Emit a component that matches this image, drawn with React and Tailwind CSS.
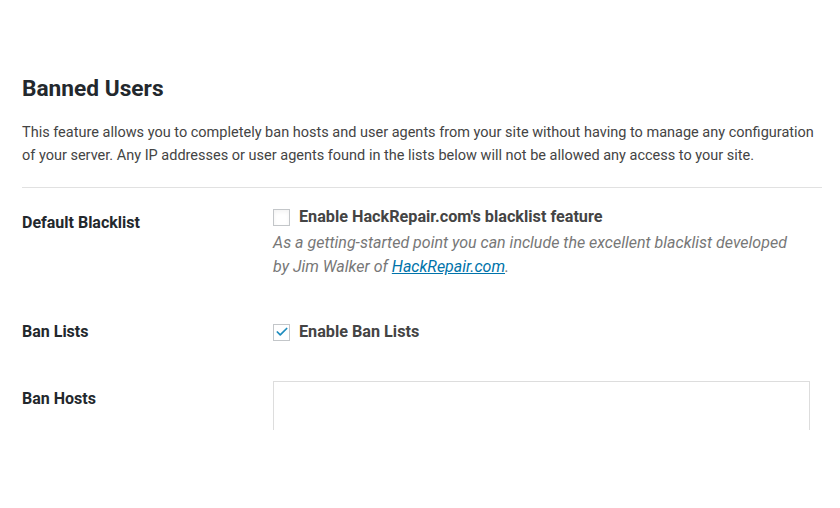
import { Check } from 'lucide-react';

export default function App() {
    return (
        <div className="w-[840px] h-[508px] bg-white font-['Roboto',sans-serif]">
            <div className="h-[430px] overflow-hidden px-[22px] pt-[74px]">
                <h2 className="text-[22.7px] leading-[30px] font-bold text-[#23282d]">Banned Users</h2>

                <p className="mt-[17px] text-[14.5px] leading-[23px] text-[#444] w-[800px]">
                    This feature allows you to completely ban hosts and user agents from your site without having to manage any configuration of your server. Any IP addresses or user agents found in the lists below will not be allowed any access to your site.
                </p>

                <div className="mt-[20px] border-t border-[#e1e1e1] w-[800px]" />

                <div className="flex mt-[19px]">
                    <div className="w-[251px] shrink-0 pt-[4px] text-[16px] font-bold text-[#23282d]">Default Blacklist</div>
                    <div>
                        <label className="flex items-center gap-[9px]">
                            <span className="w-[17px] h-[17px] border border-[#c3c6c9] bg-white shadow-inner" />
                            <span className="text-[16.2px] leading-[20px] font-bold text-[#444]">Enable HackRepair.com's blacklist feature</span>
                        </label>
                        <p className="mt-[4px] text-[16px] leading-[24px] italic text-[#777] w-[528px]">
                            As a getting-started point you can include the excellent blacklist developed by Jim Walker of <a className="text-[#0073aa] underline">HackRepair.com</a>.
                        </p>
                    </div>
                </div>

                <div className="flex mt-[43px]">
                    <div className="w-[251px] shrink-0 text-[16px] leading-[20px] font-bold text-[#23282d]">Ban Lists</div>
                    <label className="flex items-center gap-[9px]">
                        <span className="w-[17px] h-[17px] border border-[#c3c6c9] bg-white flex items-center justify-center">
                            <Check size={14} strokeWidth={3} className="text-[#1e8cbe]" />
                        </span>
                        <span className="text-[16.2px] leading-[20px] font-bold text-[#444]">Enable Ban Lists</span>
                    </label>
                </div>

                <div className="flex mt-[39px]">
                    <div className="w-[251px] shrink-0 pt-[8px] text-[16px] leading-[20px] font-bold text-[#23282d]">Ban Hosts</div>
                    <div className="w-[537px] h-[120px] border border-[#ddd]" />
                </div>
            </div>
        </div>
    );
}
